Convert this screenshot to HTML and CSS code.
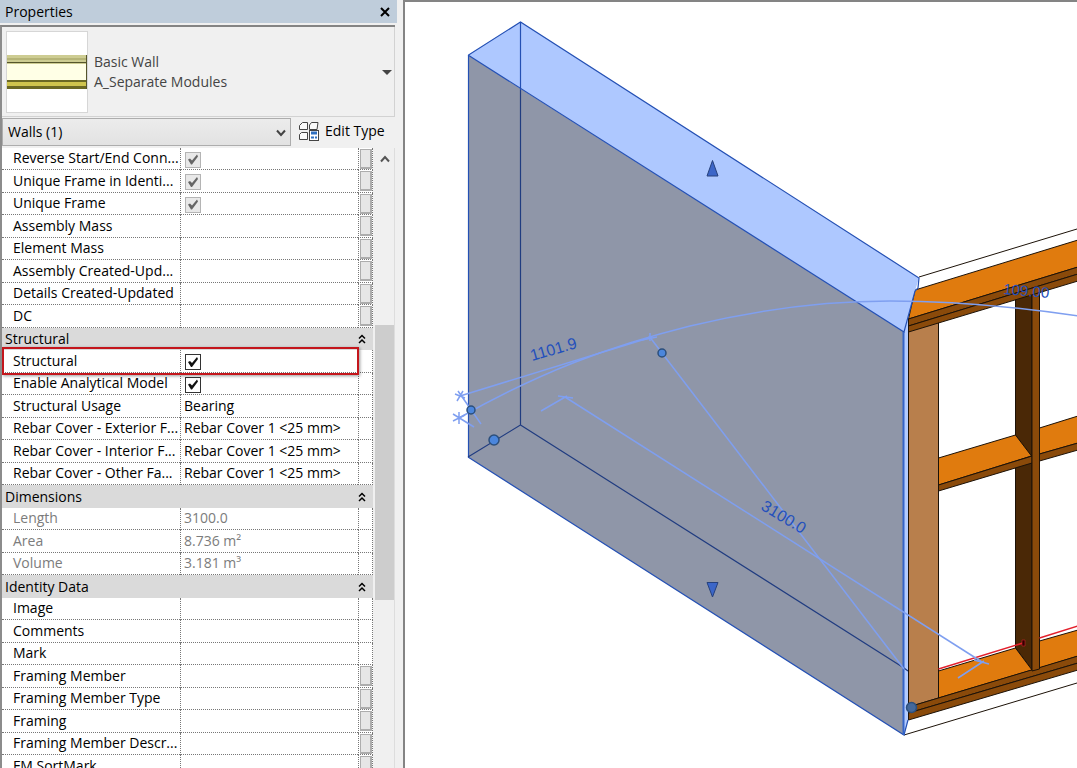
FILE: index.html
```
<!DOCTYPE html>
<html lang="en">
<head>
  <meta charset="UTF-8">
  <meta name="viewport" content="width=device-width, initial-scale=1.0">
  <title>Properties</title>
  <link rel="stylesheet" href="styles.css">
</head>
<body>
  <aside class="panel">
    <header class="panel-title">
      <h1>Properties</h1>
      <button class="close" aria-label="Close">
        <svg width="10" height="10" viewBox="0 0 10 10"><path d="M1 1L9 9M9 1L1 9" stroke="#000" stroke-width="2"/></svg>
      </button>
    </header>

    <div class="panel-body">
      <button class="type-selector">
        <svg class="preview" width="82" height="82" viewBox="0 0 82 82">
          <rect x=".5" y=".5" width="81" height="81" fill="#fff" stroke="#d6d6d6"/>
          <rect x="1" y="24" width="80" height="9" fill="#cdcc92"/>
          <rect x="1" y="27" width="80" height="2" fill="#b5b477"/>
          <rect x="1" y="31" width="80" height="1" fill="#55552c"/>
          <rect x="1" y="33" width="80" height="16" fill="#ffffe6"/>
          <rect x="1" y="49" width="80" height="9" fill="#6b6824"/>
          <rect x="1" y="51" width="80" height="4" fill="#cfc44e"/>
          <rect x="80" y="24" width="1" height="34" fill="#55552c"/>
        </svg>
        <span class="type-name">Basic Wall<br>A_Separate Modules</span>
        <svg class="caret" width="10" height="5" viewBox="0 0 10 5"><path d="M0 0H10L5 5Z" fill="#444"/></svg>
      </button>

      <div class="filter">
        <div class="select-wrap">
          <select aria-label="Category">
            <option>Walls (1)</option>
          </select>
          <svg class="select-arrow" width="10" height="8" viewBox="0 0 10 8"><path d="M1 1.5L5 6L9 1.5" fill="none" stroke="#444" stroke-width="2"/></svg>
        </div>
        <button class="edit-type">
          <svg width="21" height="21" viewBox="0 0 21 21" fill="none" stroke="#444">
            <path d="M3.500 1.500H8.500V8.500H.5V4.500ZM12.500 1.500H19L18 8.500H10.500V4Z M2.500 11.500H8.500V18.500H.5V13.500Z" fill="#fafafa"/>
            <rect x="10.500" y="9.500" width="9" height="10" fill="#fff"/>
            <path d="M12 12H18" stroke="#2f6fc0" stroke-width="3"/>
            <path d="M12 16.500H15M16 16.500H18" stroke="#2f6fc0" stroke-width="2"/>
          </svg>
          Edit Type
        </button>
      </div>

      <div class="grid-area">
        <table class="props">
          <colgroup>
            <col>
            <col class="col-value">
            <col class="col-btn">
          </colgroup>
          <tbody>
            <tr><th><label for="reverse">Reverse Start/End Conn...</label></th><td><input type="checkbox" id="reverse" checked disabled></td><td><button class="assoc" aria-label="Associate"></button></td></tr>
            <tr><th><label for="unique-id">Unique Frame in Identi...</label></th><td><input type="checkbox" id="unique-id" checked disabled></td><td><button class="assoc" aria-label="Associate"></button></td></tr>
            <tr><th><label for="unique">Unique Frame</label></th><td><input type="checkbox" id="unique" checked disabled></td><td><button class="assoc" aria-label="Associate"></button></td></tr>
            <tr><th>Assembly Mass</th><td></td><td><button class="assoc" aria-label="Associate"></button></td></tr>
            <tr><th>Element Mass</th><td></td><td><button class="assoc" aria-label="Associate"></button></td></tr>
            <tr><th>Assembly Created-Upd...</th><td></td><td><button class="assoc" aria-label="Associate"></button></td></tr>
            <tr><th>Details Created-Updated</th><td></td><td><button class="assoc" aria-label="Associate"></button></td></tr>
            <tr><th>DC</th><td></td><td><button class="assoc" aria-label="Associate"></button></td></tr>

            <tr class="group"><th colspan="3"><button class="group-btn">Structural <svg width="8" height="10" viewBox="0 0 8 10"><path d="M1 4.500L4 1.500L7 4.500M1 9L4 6L7 9" fill="none" stroke="#000" stroke-width="1.500"/></svg></button></th></tr>
            <tr class="highlight"><th><label for="structural">Structural</label></th><td><input type="checkbox" id="structural" checked></td><td></td></tr>
            <tr><th><label for="analytical">Enable Analytical Model</label></th><td><input type="checkbox" id="analytical" checked></td><td></td></tr>
            <tr><th>Structural Usage</th><td>Bearing</td><td></td></tr>
            <tr><th>Rebar Cover - Exterior F...</th><td>Rebar Cover 1 &lt;25 mm&gt;</td><td></td></tr>
            <tr><th>Rebar Cover - Interior F...</th><td>Rebar Cover 1 &lt;25 mm&gt;</td><td></td></tr>
            <tr><th>Rebar Cover - Other Fa...</th><td>Rebar Cover 1 &lt;25 mm&gt;</td><td></td></tr>

            <tr class="group"><th colspan="3"><button class="group-btn">Dimensions <svg width="8" height="10" viewBox="0 0 8 10"><path d="M1 4.500L4 1.500L7 4.500M1 9L4 6L7 9" fill="none" stroke="#000" stroke-width="1.500"/></svg></button></th></tr>
            <tr class="readonly"><th>Length</th><td>3100.0</td><td></td></tr>
            <tr class="readonly"><th>Area</th><td>8.736 m²</td><td></td></tr>
            <tr class="readonly"><th>Volume</th><td>3.181 m³</td><td></td></tr>

            <tr class="group"><th colspan="3"><button class="group-btn">Identity Data <svg width="8" height="10" viewBox="0 0 8 10"><path d="M1 4.500L4 1.500L7 4.500M1 9L4 6L7 9" fill="none" stroke="#000" stroke-width="1.500"/></svg></button></th></tr>
            <tr><th>Image</th><td></td><td></td></tr>
            <tr><th>Comments</th><td></td><td></td></tr>
            <tr><th>Mark</th><td></td><td></td></tr>
            <tr><th>Framing Member</th><td></td><td><button class="assoc" aria-label="Associate"></button></td></tr>
            <tr><th>Framing Member Type</th><td></td><td><button class="assoc" aria-label="Associate"></button></td></tr>
            <tr><th>Framing</th><td></td><td><button class="assoc" aria-label="Associate"></button></td></tr>
            <tr><th>Framing Member Descr...</th><td></td><td><button class="assoc" aria-label="Associate"></button></td></tr>
            <tr><th>FM SortMark</th><td></td><td><button class="assoc" aria-label="Associate"></button></td></tr>
          </tbody>
        </table>
        <div class="scrollbar">
          <button class="scroll-up" aria-label="Scroll up">
            <svg width="10" height="8" viewBox="0 0 10 8"><path d="M1 6.500L5 2L9 6.500" fill="none" stroke="#555" stroke-width="2"/></svg>
          </button>
          <div class="thumb"></div>
        </div>
      </div>
    </div>
  </aside>

  <main class="view">
    <svg class="scene" viewBox="405 2 672 766" preserveAspectRatio="xMinYMin slice" role="img" aria-label="3D view of the selected wall">
      <!-- timber frame -->
      <g stroke="#1c1208" stroke-width="1">
        <path d="M919 277L1077 229M904 735L1077 683" fill="none"/>
        <path d="M1015.500 290H1032V670L1015.500 648Z" fill="#4a2806"/>
        <path d="M938.500 458L1015.500 435L1031.500 456L938.500 485Z" fill="#e07b0e"/>
        <path d="M938.500 485L1032 456V463L938.500 491Z" fill="#8a4a0a"/>
        <path d="M1039.500 428L1078 416V443L1039.500 454Z" fill="#e07b0e"/>
        <path d="M1039.500 454L1078 443V450L1039.500 461Z" fill="#8a4a0a"/>
        <path d="M938.500 671L1015.500 648L1032 670L938.500 698Z" fill="#e07b0e"/>
        <path d="M1039.500 641L1078 630V656L1039.500 668Z" fill="#e07b0e"/>
        <path d="M908.500 320H938.500V698L908.500 707Z" fill="#b87f4c"/>
        <path d="M908.500 707L1078 656V663L908.500 713Z" fill="#8a4a0a"/>
        <path d="M908.500 713L1078 663V670L908.500 720Z" fill="#8a4a0a"/>
        <path d="M1032 285H1039.500V669L1032 671Z" fill="#8a4a0a"/>
        <path d="M915 290L1078 240V267L908.500 319Z" fill="#e07b0e"/>
        <path d="M908.500 319L1078 267V274L908.500 326Z" fill="#8a4a0a"/>
        <path d="M908.500 326L1078 274V281L908.500 332Z" fill="#8a4a0a"/>
      </g>
      <path d="M938.500 669L1023 643M1039.500 638L1078 626" stroke="#e3202c" stroke-width="1.500" fill="none"/>
      <path d="M1022 640H1025V646H1022Z" fill="#300" stroke="#e3202c" stroke-width=".5"/>

      <!-- selected wall -->
      <path d="M468 55L904 332V735L468 457Z" fill="#8f96a8"/>
      <path d="M468 55L520.500 22L919 278L915 291L904 332Z" fill="#aec8ff"/>
      <path d="M904 332L908 319V720L904 735Z" fill="#b3cbff"/>
      <g fill="none" stroke="#2450b4" stroke-width="1.200">
        <path d="M468.500 457V55L520.500 22L919 278L918 288L915 291L904 332L468 55M468 457L904 735L908 720"/>
        <path d="M520.500 22V90"/>
        <path d="M520.500 90V425L468 457M520.500 425L904 668L908 671" stroke="#203c80"/>
        <path d="M903.500 332V735" stroke="#3564c8" stroke-width="2"/>
      </g>
      <path d="M908.500 330V720" stroke="#1c1208"/>

      <!-- dimensions -->
      <g fill="none" stroke="#7f9ff0" stroke-width="1.500">
        <path d="M460 396L652 337"/>
        <path d="M459 418C540 372 610 346 690 326C760 309 830 301 890 301C950 301 1010 306 1078 316"/>
        <path d="M649 336L904 669"/>
        <path d="M565 397L982 662"/>
        <path d="M541 411L567 396M558 396L573 398M958 678L984 661M974 660L989 664"/>
        <path d="M642 340L657 337M650 333V341"/>
        <path d="M455 394L465 398M457 401L463 391M458 391L481 424"/>
        <path d="M453 414L474 427M459 412V424M453 421L465 415"/>
      </g>
      <g fill="#4b86dc" stroke="#2c4f7c" stroke-width="1.500">
        <circle cx="471" cy="410" r="4"/>
        <circle cx="494" cy="440" r="5"/>
        <circle cx="662" cy="353" r="4"/>
        <circle cx="911.500" cy="707.500" r="5" fill="#44689a"/>
      </g>
      <path d="M712.500 160.500L718 176H707ZM707 582.500H718L712.500 597Z" fill="#3c66c8" stroke="#26417c"/>
      <g class="dim-text">
        <text transform="translate(532 361) rotate(-16)">1101.9</text>
        <text transform="translate(760 509) rotate(31)">3100.0</text>
        <text class="dim-small" transform="translate(1003 294) rotate(5)">109.00</text>
      </g>
    </svg>
  </main>
</body>
</html>
```
FILE: styles.css
```
* {
  box-sizing: border-box;
}
body {
  margin: 0;
  height: 100vh;
  display: flex;
  overflow: hidden;
  background: #f0f0f0;
  font-family: "Open Sans", "Noto Sans", sans-serif;
  font-size: 14px;
  line-height: 20px;
  color: #000;
}
button,
select {
  font: inherit;
  color: inherit;
  margin: 0;
  padding: 0;
  border: none;
  border-radius: 0;
  background: none;
}
svg {
  display: block;
  flex: none;
}

/* properties palette */
.panel {
  flex: none;
  width: 397px;
  display: flex;
  flex-direction: column;
}
.panel-title {
  display: flex;
  align-items: center;
  justify-content: space-between;
  height: 23px;
  padding: 0 7px 0 5px;
  background: #bfcddb;
}
h1 {
  margin: 0;
  font-size: 14px;
  font-weight: normal;
}
.panel-body {
  flex: 1;
  min-height: 0;
  display: flex;
  flex-direction: column;
  margin-top: 2px;
  margin-right: 2px;
  border-top: 2px solid #848484;
  border-left: 2px solid #8c8c8c;
}
.type-selector {
  display: flex;
  align-items: center;
  gap: 6px;
  height: 90px;
  padding: 1px 2px 0 4px;
  border: 1px solid #d2d2d2;
  border-width: 0 1px 1px 0;
  color: #444;
  text-align: left;
}
.caret {
  margin-left: auto;
}
.filter {
  display: flex;
  gap: 8px;
  height: 31px;
  padding-top: 1px;
}
.select-wrap {
  position: relative;
  width: 289px;
  height: 28px;
}
select {
  appearance: none;
  width: 100%;
  height: 100%;
  padding: 0 5px;
  border: 1px solid #adadad;
  background: linear-gradient(#ececec, #e2e2e2);
}
.select-arrow {
  position: absolute;
  right: 5px;
  top: 11px;
}
.edit-type {
  display: flex;
  align-items: center;
  gap: 5px;
  height: 26px;
}

/* parameter grid */
.grid-area {
  flex: 1;
  min-height: 0;
  display: flex;
  gap: 2px;
  overflow: hidden;
}
.props {
  flex: 1;
  align-self: flex-start;
  table-layout: fixed;
  border-spacing: 0;
  background: #fff;
}
.col-value {
  width: 178px;
}
.col-btn {
  width: 15px;
}
.props tr {
  height: 23px;
}
.props tr:nth-child(odd) {
  height: 22px;
}
.props th,
.props td {
  padding: 0 0 1px 3px;
  border-bottom: 1px dotted #777;
  border-left: 1px dotted #777;
  font-weight: normal;
  text-align: left;
  line-height: 20px;
  white-space: nowrap;
}
.props th {
  padding-left: 11px;
  border-left: none;
}
.props td:last-child {
  padding: 0 0 0 1px;
  border-right: 1px dotted #777;
}
.props .group th {
  padding: 0;
  border: none;
  background: #dadada;
}
.group-btn {
  display: flex;
  align-items: center;
  justify-content: space-between;
  width: 100%;
  padding: 0 7px 0 3px;
}
.readonly {
  color: #7c7c7c;
}
.assoc {
  display: block;
  width: 12px;
  height: 20px;
  border: 1px solid #adadad;
  border-right-width: 2px;
  border-bottom-width: 2px;
  background: #e6e6e6;
}
.highlight {
  position: relative;
}
.highlight::after {
  content: "";
  position: absolute;
  inset: -3px 14px -2px 0;
  border: 2px solid #c4161c;
  box-shadow: 1px 1px 3px rgba(0, 0, 0, 0.4);
}
input[type="checkbox"] {
  appearance: none;
  display: block;
  width: 16px;
  height: 16px;
  margin: 3px 0 0 1px;
  border: 1px solid #333;
  background: #fff;
}
input[type="checkbox"]:checked::before {
  content: "";
  display: block;
  width: 14px;
  height: 14px;
  background: #111;
  clip-path: polygon(2px 7px, 4px 6px, 6px 8px, 11px 2px, 12px 4px, 6px 12px, 5px 12px);
}
input[type="checkbox"]:disabled {
  border-color: #b4b4b4;
  background: #e8e8e8;
}
input[type="checkbox"]:disabled::before {
  background: #666;
}
.scrollbar {
  width: 20px;
  border-right: 1px solid #ddd;
}
.scroll-up {
  display: flex;
  align-items: center;
  justify-content: center;
  width: 100%;
  height: 22px;
}
.thumb {
  height: 275px;
  margin-top: 155px;
  background: #cdcdcd;
}

/* 3D view */
.view {
  flex: 1;
  min-width: 0;
  margin-left: 6px;
  border-top: 2px solid #848484;
  border-left: 2px solid #848484;
  background: #fff;
}
.scene {
  width: 100%;
  height: 100%;
}
.dim-text {
  fill: #2450bc;
  font-family: "Liberation Sans", Arial, sans-serif;
  font-size: 16px;
}
.dim-small {
  font-size: 15px;
}
```
